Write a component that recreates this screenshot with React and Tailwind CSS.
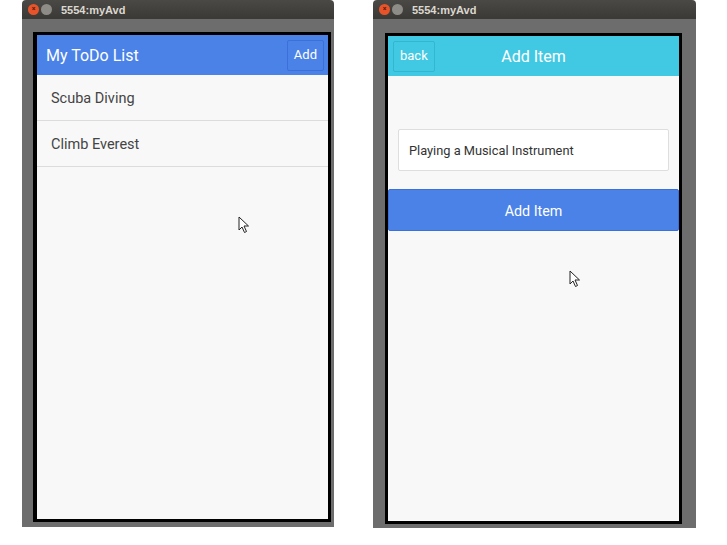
import React from 'react';

function TitleBar() {
  return (
    <div className="h-[19px] bg-gradient-to-b from-[#4a4945] to-[#3a3935] flex items-center pl-[6px] rounded-t-[4px]">
      <div className="w-[11px] h-[11px] rounded-full bg-[#e8542a] flex items-center justify-center text-[7px] leading-none text-[#5a1a0a] font-bold">×</div>
      <div className="w-[11px] h-[11px] rounded-full bg-[#8e8c86] ml-[2px]" />
      <span className="ml-[9px] pt-[1px] text-[11px] font-bold text-[#dcd8cf] font-['Liberation_Sans',sans-serif]">5554:myAvd</span>
    </div>
  );
}

function Cursor() {
  return (
    <svg width="12" height="18" viewBox="0 0 12 18">
      <path d="M1 1 L1 14 L4 11 L6.5 16.5 L8.5 15.5 L6 10 L10.5 10 Z" fill="#fff" stroke="#222" strokeWidth="1" strokeLinejoin="round" />
    </svg>
  );
}

function TodoScreen() {
  const items = ['Scuba Diving', 'Climb Everest'];
  return (
    <div className="relative h-full bg-[#f8f8f8]">
      <div className="h-[40px] bg-[#4a82e8] flex items-center justify-between pl-[9px] pr-[4px]">
        <span className="text-white text-[16px] pt-[2px]">My ToDo List</span>
        <div className="h-[31px] px-[6px] border border-[#3a70d8] rounded-[2px] flex items-center text-white text-[13px]">Add</div>
      </div>
      {items.map((item) => (
        <div key={item} className="h-[46px] border-b border-[#dcdcdc] flex items-center pl-[14px] pt-[3px] text-[14.5px] text-[#444]">
          {item}
        </div>
      ))}
      <div className="absolute left-[201px] top-[181px]">
        <Cursor />
      </div>
    </div>
  );
}

function AddScreen() {
  return (
    <div className="relative h-full bg-[#f8f8f8]">
      <div className="relative h-[40px] bg-[#41c9e3] flex items-center pl-[5px]">
        <div className="h-[31px] px-[6px] border border-[#33b6cf] rounded-[2px] flex items-center text-white text-[13px]">back</div>
        <span className="absolute left-0 right-0 pt-[2px] text-center text-white text-[16px] pointer-events-none">Add Item</span>
      </div>
      <div className="mt-[53px] mx-[10px] h-[42px] bg-white border border-[#dedede] rounded-[2px] flex items-center pl-[10px] pt-[2px] text-[12.8px] text-[#333]">
        Playing a Musical Instrument
      </div>
      <div className="mt-[18px] h-[42px] bg-[#4a82e8] border border-[#3a70d8] rounded-[2px] flex items-center justify-center pt-[3px] text-white text-[14.3px]">
        Add Item
      </div>
      <div className="absolute left-[181px] top-[234px]">
        <Cursor />
      </div>
    </div>
  );
}

export default function App() {
  return (
    <div className="w-[727px] h-[545px] bg-white flex items-start pl-[22px] font-['Roboto',sans-serif]">
      <div className="w-[312px]">
        <TitleBar />
        <div className="bg-[#6d6d6d] pl-[11px] pr-[3px] pt-[13px] pb-[5px]">
          <div className="border-[3px] border-black border-l-4 h-[490px]">
            <TodoScreen />
          </div>
        </div>
      </div>
      <div className="w-[323px] ml-[39px]">
        <TitleBar />
        <div className="bg-[#6d6d6d] pl-[12px] pr-[14px] pt-[14px] pb-[4px]">
          <div className="border-[3px] border-black h-[491px]">
            <AddScreen />
          </div>
        </div>
      </div>
    </div>
  );
}
